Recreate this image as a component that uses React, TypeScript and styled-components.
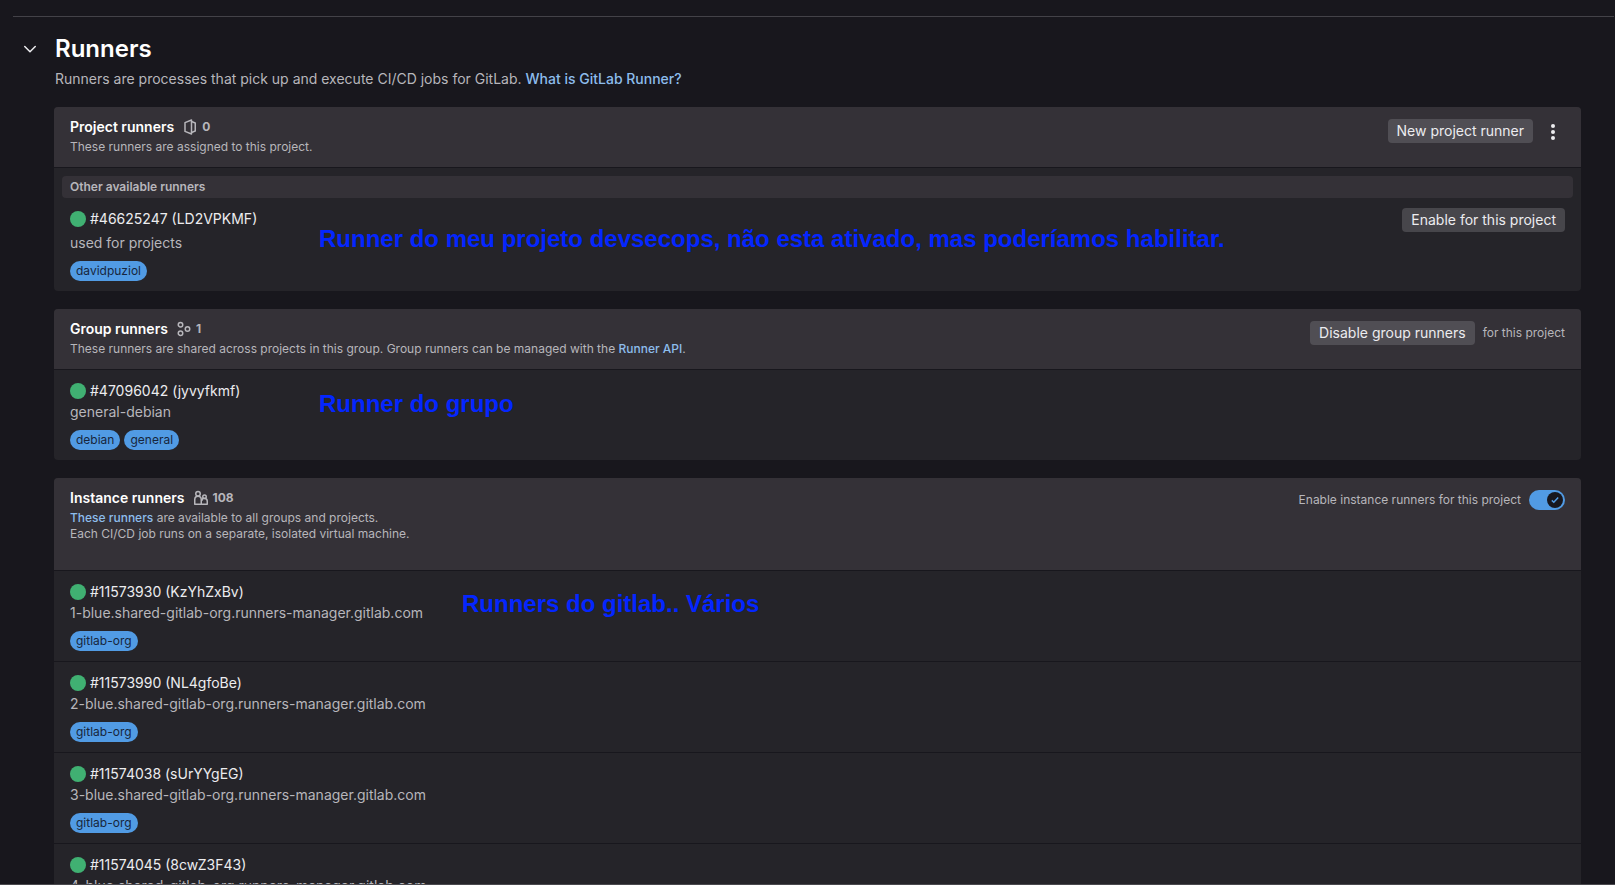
import React from "react";
import styled, { createGlobalStyle } from "styled-components";

const GlobalStyle = createGlobalStyle`
  *, *::before, *::after { box-sizing: border-box; }
  body {
    margin: 0;
    background: #18171d;
    color: #ececef;
    font-family: "Inter", "Noto Sans", sans-serif;
    font-size: 14px;
    line-height: 21px;
  }
  h2, h3, h4, p, ul { margin: 0; padding: 0; }
  ul { list-style: none; }
`;

const Page = styled.main`
  height: 100vh;
  overflow: hidden;
  padding: 16px 1px 0 13px;
  border-bottom: 1px solid #4a494e;
`;

const SettingsSection = styled.section`
  border-top: 1px solid #434248;
  padding: 19px 33px 0 5px;
`;

const SectionHeader = styled.header`
  display: flex;
  align-items: flex-start;
  gap: 13px;
`;

const CollapseButton = styled.button`
  display: flex;
  align-items: center;
  justify-content: center;
  width: 24px;
  height: 24px;
  margin-top: 1px;
  padding: 0;
  border: 0;
  background: transparent;
  color: #ececef;
`;

const SectionTitle = styled.h2`
  color: #fff;
  font-size: 24px;
  font-weight: 600;
  line-height: 26px;
`;

const SectionText = styled.p`
  margin-top: 6px;
  color: #b7b6bb;
`;

const TextLink = styled.a`
  color: #8dbdec;
  text-decoration: none;
  font-weight: ${(p: { $strong?: boolean }) => (p.$strong ? 500 : 400)};
`;

const Cards = styled.div`
  display: flex;
  flex-direction: column;
  gap: 18px;
  margin: 18px 0 0 36px;
`;

const Card = styled.section`
  border-radius: 4px;
  background: #252429;
  overflow: hidden;
`;

const CardHeader = styled.header`
  display: flex;
  justify-content: space-between;
  align-items: flex-start;
  gap: 16px;
  padding: 12px 16px;
  background: #343137;
`;

const TitleLine = styled.div`
  display: flex;
  align-items: center;
  gap: 8px;
  height: 16px;
`;

const CardTitle = styled.h3`
  color: #fff;
  font-size: 14px;
  font-weight: 600;
  line-height: 16px;
`;

const Count = styled.span`
  display: flex;
  align-items: center;
  gap: 4px;
  color: #b7b6bb;
  font-size: 12px;
  font-weight: 700;
  line-height: 16px;
`;

const CardText = styled.p`
  margin-top: 4px;
  color: #b7b6bb;
  font-size: 12px;
  line-height: 16px;
`;

const SharedText = styled.div`
  margin: 4px 0 16px;
  color: #b7b6bb;
  font-size: 12px;
  line-height: 16px;
`;

const Actions = styled.div`
  display: flex;
  align-items: center;
  flex-shrink: 0;
  gap: 8px;
  color: #b7b6bb;
  font-size: 12px;
  line-height: 16px;
`;

const Button = styled.button`
  flex-shrink: 0;
  height: 24px;
  padding: 0 9px;
  border: 0;
  border-radius: 4px;
  background: ${(p: { $onRow?: boolean }) => (p.$onRow ? "#47464b" : "#504e54")};
  color: #ececef;
  font: 400 14px/24px "Inter", "Noto Sans", sans-serif;
`;

const MenuButton = styled.button`
  display: flex;
  align-items: center;
  justify-content: center;
  width: 24px;
  height: 24px;
  padding: 2px 0 0;
  border: 0;
  background: transparent;
  color: #ececef;
`;

const ToggleLabel = styled.label`
  display: flex;
  align-items: center;
  gap: 8px;
  height: 20px;
`;

const ToggleTrack = styled.span`
  position: relative;
  display: flex;
`;

const ToggleInput = styled.input`
  appearance: none;
  width: 36px;
  height: 20px;
  margin: 0;
  border-radius: 10px;
  background: #519be4;
`;

const ToggleKnob = styled.span`
  position: absolute;
  top: 2px;
  right: 2px;
  display: flex;
  align-items: center;
  justify-content: center;
  width: 16px;
  height: 16px;
  border-radius: 50%;
  background: #18171d;
  color: #519be4;
  pointer-events: none;
`;

const ListHeading = styled.h4`
  margin: 8px 8px 0;
  padding: 0 8px;
  border-radius: 4px;
  background: #343137;
  color: #b7b6bb;
  font-size: 12px;
  font-weight: 600;
  line-height: 22px;
`;

const CardBody = styled.div`
  display: flow-root;
  border-top: 1px solid #18171d;
`;

const Row = styled.li`
  position: relative;
  padding: 10px 16px;

  & + & { border-top: 1px solid #18171d; }
`;

const RowHead = styled.div`
  display: flex;
  justify-content: space-between;
  align-items: flex-start;
`;

const RunnerName = styled.div`
  display: flex;
  align-items: center;
  gap: 4px;
  line-height: 21px;
`;

const StatusDot = styled.span`
  width: 16px;
  height: 16px;
  border-radius: 50%;
  background: #40b072;
`;

const RunnerText = styled.p`
  color: #b7b6bb;
  line-height: 21px;
`;

const Tags = styled.div`
  display: flex;
  gap: 4px;
  margin-top: 8px;
`;

const Tag = styled.span`
  padding: 0 6px;
  border-radius: 10px;
  background: #519be4;
  color: #17263c;
  font-size: 12px;
  line-height: 20px;
`;

const Note = styled.strong`
  position: absolute;
  top: ${(p: { $top: number; $left: number }) => p.$top}px;
  left: ${(p) => p.$left}px;
  color: #0426ff;
  font: 700 24px/28px "Liberation Sans", Arial, sans-serif;
  white-space: nowrap;
`;

const ChevronIcon = () => (
  <svg width="16" height="16" viewBox="0 0 16 16" fill="none" stroke="currentColor" strokeWidth="1.5" strokeLinecap="round" strokeLinejoin="round" aria-hidden="true">
    <path d="M2.75 5.5 8 10.75l5.25-5.25" />
  </svg>
);

const DotsIcon = () => (
  <svg width="16" height="16" viewBox="0 0 16 16" fill="currentColor" aria-hidden="true">
    <circle cx="8" cy="2" r="2" />
    <circle cx="8" cy="8" r="2" />
    <circle cx="8" cy="14" r="2" />
  </svg>
);

const CheckIcon = () => (
  <svg width="8" height="8" viewBox="0 0 8 8" fill="none" stroke="currentColor" strokeWidth="1.5" aria-hidden="true">
    <path d="M.8 4.4 2.8 6.2 7.2 1.5" />
  </svg>
);

const ProjectIcon = () => (
  <svg width="16" height="16" viewBox="0 0 16 16" fill="none" stroke="currentColor" strokeWidth="1.5" strokeLinejoin="round" aria-hidden="true">
    <path d="M9.5 1 3 3.6v8.8L9.5 15z" />
    <path d="M9.5 2.5 13.25 4v8L9.5 13.5" />
  </svg>
);

const GroupIcon = () => (
  <svg width="16" height="16" viewBox="0 0 16 16" fill="none" stroke="currentColor" strokeWidth="1.5" aria-hidden="true">
    <circle cx="4.5" cy="3.75" r="2.25" />
    <circle cx="4.5" cy="12.25" r="2.25" />
    <circle cx="11.5" cy="8" r="2.25" />
  </svg>
);

const UsersIcon = () => (
  <svg width="16" height="16" viewBox="0 0 16 16" fill="none" stroke="currentColor" strokeWidth="1.5" strokeLinejoin="round" aria-hidden="true">
    <circle cx="5" cy="3.75" r="2.25" />
    <path d="M1.75 14.25V9.5a3.25 3.25 0 0 1 6.5 0v4.75z" />
    <circle cx="11.5" cy="6.75" r="1.75" />
    <path d="M8.25 14.25h6v-3a2.75 2.75 0 0 0-5.5-.25" />
  </svg>
);

type Runner = { name: string; text: string; tags: string[] };
type NoteData = { text: string; top: number; left: number };

const instanceRunners: Runner[] = [
  { name: "#11573930 (KzYhZxBv)", text: "1-blue.shared-gitlab-org.runners-manager.gitlab.com", tags: ["gitlab-org"] },
  { name: "#11573990 (NL4gfoBe)", text: "2-blue.shared-gitlab-org.runners-manager.gitlab.com", tags: ["gitlab-org"] },
  { name: "#11574038 (sUrYYgEG)", text: "3-blue.shared-gitlab-org.runners-manager.gitlab.com", tags: ["gitlab-org"] },
  { name: "#11574045 (8cwZ3F43)", text: "4-blue.shared-gitlab-org.runners-manager.gitlab.com", tags: ["gitlab-org"] },
];

function RunnerRow({ runner, note, action }: { runner: Runner; note?: NoteData; action?: React.ReactNode }) {
  return (
    <Row>
      <RowHead>
        <RunnerName>
          <StatusDot />
          <span>{runner.name}</span>
        </RunnerName>
        {action}
      </RowHead>
      <RunnerText>{runner.text}</RunnerText>
      <Tags>
        {runner.tags.map((tag) => (
          <Tag key={tag}>{tag}</Tag>
        ))}
      </Tags>
      {note && <Note $top={note.top} $left={note.left}>{note.text}</Note>}
    </Row>
  );
}

export default function App() {
  return (
    <>
      <GlobalStyle />
      <Page>
        <SettingsSection>
          <SectionHeader>
            <CollapseButton aria-label="Collapse runners" aria-expanded="true">
              <ChevronIcon />
            </CollapseButton>
            <div>
              <SectionTitle>Runners</SectionTitle>
              <SectionText>
                Runners are processes that pick up and execute CI/CD jobs for GitLab.{" "}
                <TextLink href="#runner-help" $strong>What is GitLab Runner?</TextLink>
              </SectionText>
            </div>
          </SectionHeader>

          <Cards>
            <Card>
              <CardHeader>
                <div>
                  <TitleLine>
                    <CardTitle>Project runners</CardTitle>
                    <Count><ProjectIcon />0</Count>
                  </TitleLine>
                  <CardText>These runners are assigned to this project.</CardText>
                </div>
                <Actions>
                  <Button>New project runner</Button>
                  <MenuButton aria-label="More actions"><DotsIcon /></MenuButton>
                </Actions>
              </CardHeader>
              <CardBody>
                <ListHeading>Other available runners</ListHeading>
                <ul>
                  <RunnerRow
                    runner={{ name: "#46625247 (LD2VPKMF)", text: "used for projects", tags: ["davidpuziol"] }}
                    note={{ text: "Runner do meu projeto devsecops, não esta ativado, mas poderíamos habilitar.", top: 27, left: 265 }}
                    action={<Button $onRow>Enable for this project</Button>}
                  />
                </ul>
              </CardBody>
            </Card>

            <Card>
              <CardHeader>
                <div>
                  <TitleLine>
                    <CardTitle>Group runners</CardTitle>
                    <Count><GroupIcon />1</Count>
                  </TitleLine>
                  <CardText>
                    These runners are shared across projects in this group. Group runners can be managed with the{" "}
                    <TextLink href="#runner-api" $strong>Runner API</TextLink>.
                  </CardText>
                </div>
                <Actions>
                  <Button>Disable group runners</Button>
                  <span>for this project</span>
                </Actions>
              </CardHeader>
              <CardBody>
                <ul>
                  <RunnerRow
                    runner={{ name: "#47096042 (jyvyfkmf)", text: "general-debian", tags: ["debian", "general"] }}
                    note={{ text: "Runner do grupo", top: 20, left: 265 }}
                  />
                </ul>
              </CardBody>
            </Card>

            <Card>
              <CardHeader>
                <div>
                  <TitleLine>
                    <CardTitle>Instance runners</CardTitle>
                    <Count><UsersIcon />108</Count>
                  </TitleLine>
                  <SharedText>
                    <p><TextLink href="#instance-runners" $strong>These runners</TextLink> are available to all groups and projects.</p>
                    <p>Each CI/CD job runs on a separate, isolated virtual machine.</p>
                  </SharedText>
                </div>
                <Actions>
                  <ToggleLabel>
                    Enable instance runners for this project
                    <ToggleTrack>
                      <ToggleInput type="checkbox" role="switch" defaultChecked />
                      <ToggleKnob><CheckIcon /></ToggleKnob>
                    </ToggleTrack>
                  </ToggleLabel>
                </Actions>
              </CardHeader>
              <CardBody>
                <ul>
                  {instanceRunners.map((runner, i) => (
                    <RunnerRow
                      key={runner.name}
                      runner={runner}
                      note={i === 0 ? { text: "Runners do gitlab.. Vários", top: 19, left: 408 } : undefined}
                    />
                  ))}
                </ul>
              </CardBody>
            </Card>
          </Cards>
        </SettingsSection>
      </Page>
    </>
  );
}
